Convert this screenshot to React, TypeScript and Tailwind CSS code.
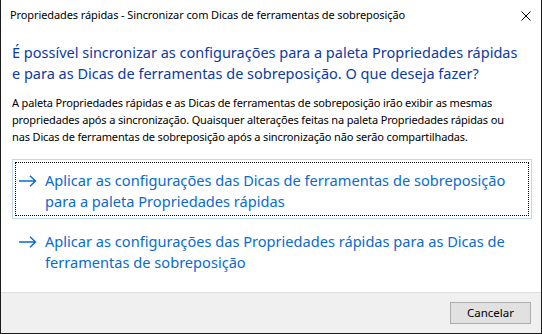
import React from "react";

function Arrow() {
  return (
    <svg width="18" height="12" viewBox="0 0 18 12" className="shrink-0">
      <path d="M0 6 H16.5 M11 0.8 L16.5 6 L11 11.2" stroke="currentColor" strokeWidth="1.4" fill="none" />
    </svg>
  );
}

function CommandLink({ focused, l1, l2 }: { focused?: boolean; l1: string; l2: string }) {
  return (
    <div className={`w-[520px] border p-[2px] ${focused ? "border-[#bcd8f1]" : "border-transparent"}`}>
      <div className={`border ${focused ? "border-dotted border-black" : "border-transparent"} pl-[3px] pt-[7px] pb-[3px] flex items-start gap-[8px] text-[#0a6bd0]`}>
        <div className="h-[21px] flex items-center">
          <Arrow />
        </div>
        <div className="text-[14.6px] leading-[21px] whitespace-nowrap">
          {l1}
          <br />
          {l2}
        </div>
      </div>
    </div>
  );
}

export default function App() {
  return (
    <div className="w-[542px] h-[334px] bg-white border-x border-b border-[#1b1b1b] flex flex-col font-['Noto_Sans',sans-serif] text-black overflow-hidden">
      <div className="h-[31px] shrink-0 flex items-center justify-between pl-[9px] pr-[10px]">
        <span className="text-[11px] tracking-[-0.1px] whitespace-nowrap">
          Propriedades rápidas - Sincronizar com Dicas de ferramentas de sobreposição
        </span>
        <svg width="10" height="10" viewBox="0 0 10 10">
          <path d="M0.5 0.5 L9.5 9.5 M9.5 0.5 L0.5 9.5" stroke="#000" strokeWidth="1" />
        </svg>
      </div>
      <div className="flex-1 flex flex-col px-[11px] pt-[11px]">
        <h1 className="text-[14.5px] leading-[21px] text-[#0d3aa3] whitespace-nowrap">
          É possível sincronizar as configurações para a paleta Propriedades rápidas
          <br />e para as Dicas de ferramentas de sobreposição. O que deseja fazer?
        </h1>
        <p className="mt-[10px] text-[11px] tracking-[-0.15px] leading-[17px] whitespace-nowrap">
          A paleta Propriedades rápidas e as Dicas de ferramentas de sobreposição irão exibir as mesmas
          <br />
          propriedades após a sincronização. Quaisquer alterações feitas na paleta Propriedades rápidas ou
          <br />
          nas Dicas de ferramentas de sobreposição após a sincronização não serão compartilhadas.
        </p>
        <div className="mt-[14px] flex flex-col gap-[1px]">
          <CommandLink
            focused
            l1="Aplicar as configurações das Dicas de ferramentas de sobreposição"
            l2="para a paleta Propriedades rápidas"
          />
          <CommandLink
            l1="Aplicar as configurações das Propriedades rápidas para as Dicas de"
            l2="ferramentas de sobreposição"
          />
        </div>
      </div>
      <div className="h-[41px] shrink-0 border-t border-[#dfdfdf] bg-[#f0f0f0] flex justify-end items-start pt-[9px] pr-[10px]">
        <button className="w-[81px] h-[22px] bg-[#e1e1e1] border border-[#adadad] text-[11.5px] leading-none flex items-center justify-center">
          Cancelar
        </button>
      </div>
    </div>
  );
}
